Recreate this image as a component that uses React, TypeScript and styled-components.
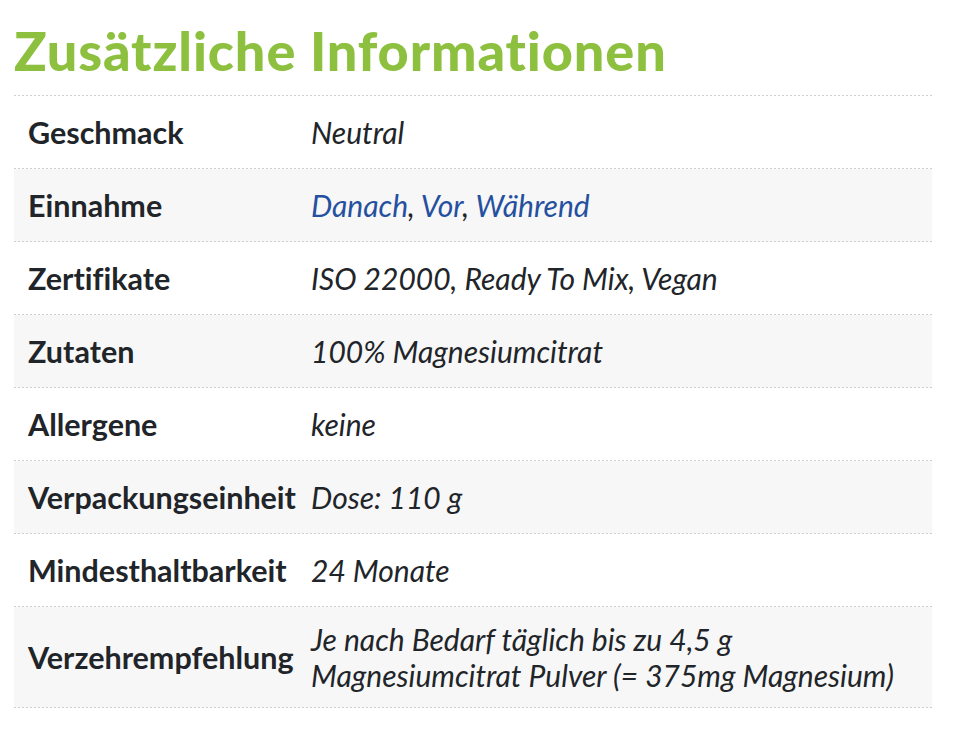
import React from "react";
import styled, { createGlobalStyle } from "styled-components";

const GlobalStyle = createGlobalStyle`
  html, body {
    margin: 0;
    padding: 0;
    background: #ffffff;
  }
  body {
    font-family: "Lato", "Liberation Sans", sans-serif;
    color: #212529;
    font-variant-ligatures: none;
  }
`;

const Page = styled.div`
  padding: 19px 22px 0 14px;
`;

const Heading = styled.h2`
  margin: 0 0 12px 0;
  font-family: "Lato", "Liberation Sans", sans-serif;
  font-weight: 900;
  font-size: 54px;
  line-height: 64px;
  letter-spacing: 0.9px;
  color: #8dc03f;
  font-variant-ligatures: none;
`;

const dots = "repeating-linear-gradient(to right, #cfcfcf 0 2px, transparent 2px 4px)";

const Table = styled.div`
  display: flex;
  flex-direction: column;
  background: ${dots} top left / 100% 1px no-repeat;
  padding-top: 1px;
`;

const Row = styled.div<{ $striped: boolean }>`
  display: grid;
  grid-template-columns: 283px 1fr;
  align-items: center;
  padding-bottom: 1px;
  background: ${dots} bottom left / 100% 1px no-repeat,
    ${(p) => (p.$striped ? "#f7f7f7" : "#ffffff")};
`;

const Label = styled.div`
  padding: 14px 0 14px 14px;
  font-weight: 700;
  font-size: 30.5px;
  line-height: 44px;
  color: #212529;
  white-space: nowrap;
`;

const Value = styled.div`
  padding: 14px 14px 14px 14px;
  font-style: italic;
  font-size: 30px;
  line-height: 36px;
  color: #212529;
`;

const Link = styled.a`
  color: #25509f;
  text-decoration: none;
`;

type Item = { label: string; value: React.ReactNode };

const items: Item[] = [
  { label: "Geschmack", value: "Neutral" },
  {
    label: "Einnahme",
    value: (
      <>
        <Link href="#">Danach</Link>, <Link href="#">Vor</Link>, <Link href="#">Während</Link>
      </>
    ),
  },
  { label: "Zertifikate", value: "ISO 22000, Ready To Mix, Vegan" },
  { label: "Zutaten", value: "100% Magnesiumcitrat" },
  { label: "Allergene", value: "keine" },
  { label: "Verpackungseinheit", value: "Dose: 110 g" },
  { label: "Mindesthaltbarkeit", value: "24 Monate" },
  {
    label: "Verzehrempfehlung",
    value: (
      <>
        Je nach Bedarf täglich bis zu 4,5 g
        <br />
        Magnesiumcitrat Pulver (= 375mg Magnesium)
      </>
    ),
  },
];

export default function App() {
  return (
    <>
      <GlobalStyle />
      <Page>
        <Heading>Zusätzliche Informationen</Heading>
        <Table>
          {items.map((it, i) => (
            <Row key={it.label} $striped={i % 2 === 1}>
              <Label>{it.label}</Label>
              <Value>{it.value}</Value>
            </Row>
          ))}
        </Table>
      </Page>
    </>
  );
}
